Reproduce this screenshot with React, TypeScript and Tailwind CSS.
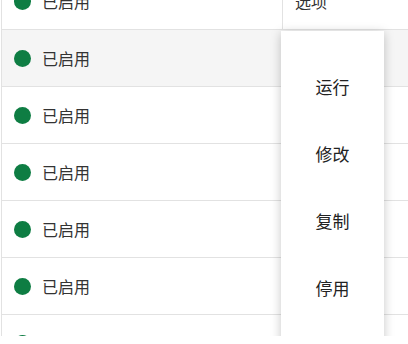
const rows = [0, 1, 2, 3, 4, 5, 6];

const menuItems = ["运行", "修改", "复制", "停用"];

function StatusRow({ index }: { index: number }) {
  const hovered = index === 1;
  return (
    <div
      className={`flex h-[57px] border-b border-[#e2e2e2] ${
        hovered ? "bg-[#f5f5f5]" : "bg-white"
      }`}
    >
      <div className="flex w-[280px] items-center gap-[11px] pl-[12px]">
        <span className="h-[17px] w-[17px] shrink-0 rounded-full bg-[#0e7d43]" />
        <span className="text-[16px] text-[#333333]">已启用</span>
      </div>
      <div
        className={`flex flex-1 items-center pl-[12px] text-[16px] text-[#333333] ${
          index === 0 ? "border-l border-[#e2e2e2]" : ""
        }`}
      >
        {index === 0 ? "选项" : ""}
      </div>
    </div>
  );
}

export default function App() {
  return (
    <div
      className="h-[344px] w-[408px] bg-white"
      style={{ fontFamily: '"Noto Sans CJK SC", "Noto Sans", sans-serif' }}
    >
      <div className="relative h-[336px] w-[408px] overflow-hidden">
        <div className="mt-[-27px] ml-[1px] border-l border-[#e2e2e2]">
          {rows.map((i) => (
            <StatusRow key={i} index={i} />
          ))}
        </div>

        <div className="absolute left-[281px] top-[31px] h-[340px] w-[103px] bg-white pt-[22px] shadow-[0_2px_10px_rgba(0,0,0,0.22)]">
          {menuItems.map((label) => (
            <div
              key={label}
              className="flex h-[67px] items-center justify-center text-[17px] text-[#222222]"
            >
              {label}
            </div>
          ))}
        </div>
      </div>
    </div>
  );
}
